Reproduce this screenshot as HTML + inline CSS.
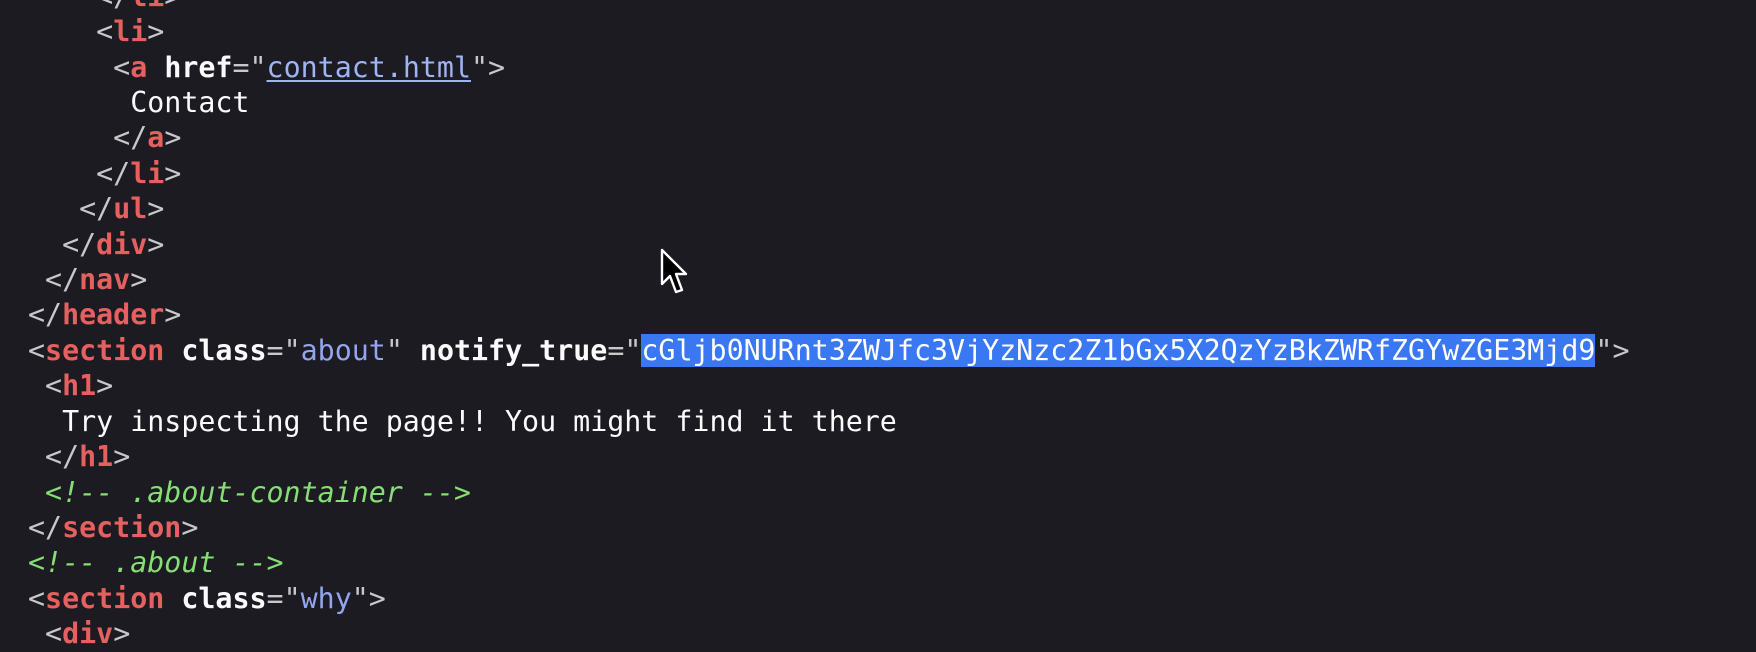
<!DOCTYPE html>
<html><head><meta charset="utf-8"><style>
html,body{margin:0;padding:0;}
body{width:1756px;height:626px;background:#1c1b22;overflow:hidden;position:relative;}
#code{position:absolute;left:28px;top:-21.2px;font-family:"DejaVu Sans Mono","Liberation Mono",monospace;font-size:28.3px;line-height:35.4px;color:#fbfbfe;white-space:pre;}
.b{color:#c8c8ca}
.t{color:#e5605f;font-weight:bold}
.a{color:#fbfbfe;font-weight:bold}
.v{color:#93a5ee}
.u{color:#9fb4f5;text-decoration:underline;text-underline-offset:3px}
.c{color:#86de74;font-style:italic}
.h{background:#3a77f2;color:#fff}
</style></head><body>
<div id="code"><span class="b">    &lt;/</span><span class="t">li</span><span class="b">&gt;</span>
<span class="b">    &lt;</span><span class="t">li</span><span class="b">&gt;</span>
<span class="b">     &lt;</span><span class="t">a</span> <span class="a">href</span><span class="b">="</span><span class="u">contact.html</span><span class="b">"&gt;</span>
      Contact
<span class="b">     &lt;/</span><span class="t">a</span><span class="b">&gt;</span>
<span class="b">    &lt;/</span><span class="t">li</span><span class="b">&gt;</span>
<span class="b">   &lt;/</span><span class="t">ul</span><span class="b">&gt;</span>
<span class="b">  &lt;/</span><span class="t">div</span><span class="b">&gt;</span>
<span class="b"> &lt;/</span><span class="t">nav</span><span class="b">&gt;</span>
<span class="b">&lt;/</span><span class="t">header</span><span class="b">&gt;</span>
<span class="b">&lt;</span><span class="t">section</span> <span class="a">class</span><span class="b">="</span><span class="v">about</span><span class="b">"</span> <span class="a">notify_true</span><span class="b">="</span><span class="h">cGljb0NURnt3ZWJfc3VjYzNzc2Z1bGx5X2QzYzBkZWRfZGYwZGE3Mjd9</span><span class="b">"&gt;</span>
<span class="b"> &lt;</span><span class="t">h1</span><span class="b">&gt;</span>
  Try inspecting the page!! You might find it there
<span class="b"> &lt;/</span><span class="t">h1</span><span class="b">&gt;</span>
<span class="c"> &lt;!-- .about-container --&gt;</span>
<span class="b">&lt;/</span><span class="t">section</span><span class="b">&gt;</span>
<span class="c">&lt;!-- .about --&gt;</span>
<span class="b">&lt;</span><span class="t">section</span> <span class="a">class</span><span class="b">="</span><span class="v">why</span><span class="b">"&gt;</span>
<span class="b"> &lt;</span><span class="t">div</span><span class="b">&gt;</span></div>
<svg style="position:absolute;left:660px;top:248px" width="30" height="48" viewBox="0 0 15 24"><path d="M1 1 L1 18 L5 14 L8 22 L11 21 L8 13 L13 13 Z" fill="#000" stroke="#fff" stroke-width="1.2" stroke-linejoin="round"/></svg>
</body></html>
